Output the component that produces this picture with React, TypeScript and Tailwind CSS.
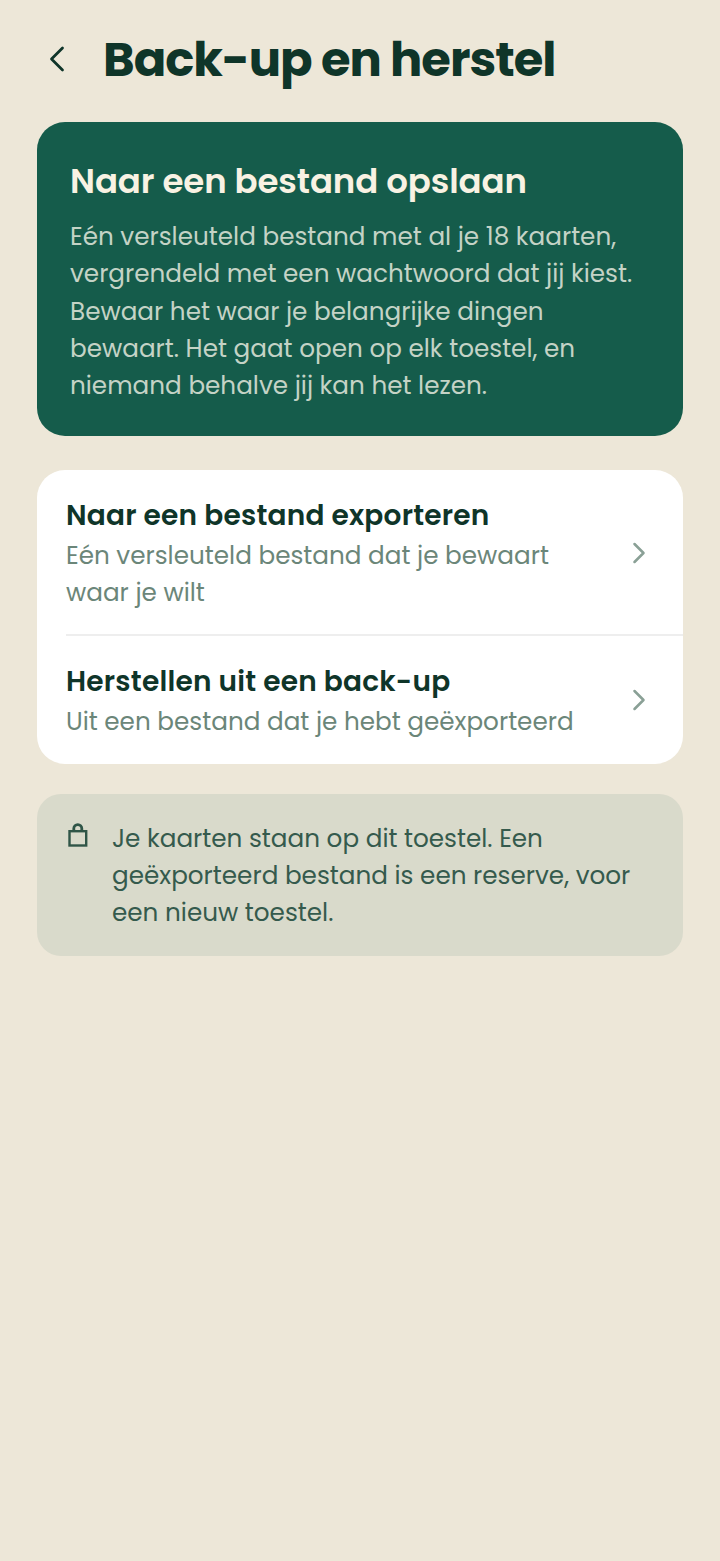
import { ChevronLeft, ChevronRight } from "lucide-react";

const font = "font-['Poppins','Noto_Sans','Open_Sans',sans-serif]";

interface RowProps {
  title: string;
  sub: string;
  border?: boolean;
  className: string;
}

const Row = ({ title, sub, border, className }: RowProps) => (
  <div className="relative flex items-center pl-[29px] pr-[26px]">
    <div className={`flex-1 pr-[24px] ${className}`}>
      <div className="text-[28px] leading-[38px] font-semibold tracking-[0.22px] text-[#0f3529]">{title}</div>
      <div className="mt-[2px] text-[24.7px] leading-[37px] text-[#6b8679]">{sub}</div>
    </div>
    <ChevronRight size={36} strokeWidth={1.7} className="shrink-0 text-[#8aa096]" />
    {border && <div className="absolute left-[29px] right-0 bottom-[-1px] h-[2px] bg-[#eeeeee]" />}
  </div>
);

export default function App() {
  return (
    <div className={`${font} min-h-[1561px] bg-[#ede7d8] px-[37px] pt-[29px]`}>
      <div className="flex items-center h-[62px] mb-[31px]">
        <ChevronLeft size={44} strokeWidth={1.5} className="shrink-0 -ml-[2px] -mt-[2px] text-[#0f3529]" />
        <h1 className="ml-[24px] text-[48px] font-bold tracking-[-1px] text-[#0f3529]">Back-up en herstel</h1>
      </div>
      <div className="rounded-[28px] bg-[#155c4b] px-[33px] pt-[36px] pb-[32px]">
        <h2 className="text-[34px] leading-[46px] font-semibold tracking-[-0.1px] text-[#f8f2e3]">Naar een bestand opslaan</h2>
        <p className="mt-[14px] text-[24.7px] leading-[37.25px] text-[#c4d3c6]">
          Eén versleuteld bestand met al je 18 kaarten, vergrendeld met een wachtwoord dat jij kiest. Bewaar het waar je belangrijke dingen bewaart. Het gaat open op elk toestel, en niemand behalve jij kan het lezen.
        </p>
      </div>
      <div className="mt-[34px] rounded-[28px] bg-white overflow-hidden">
        <Row className="pt-[27px] pb-[24px]" title="Naar een bestand exporteren" sub="Eén versleuteld bestand dat je bewaart waar je wilt" border />
        <Row className="pt-[28px] pb-[24px]" title="Herstellen uit een back-up" sub="Uit een bestand dat je hebt geëxporteerd" />
      </div>
      <div className="mt-[30px] flex rounded-[24px] bg-[#d9dacb] pl-[30px] pr-[40px] pt-[26px] pb-[25px]">
        <svg width="24" height="27" viewBox="0 0 24 27" fill="none" stroke="#2f5547" strokeWidth="2.4" className="mt-[1px] shrink-0">
          <rect x="2.5" y="10.2" width="16.7" height="14.3" />
          <path d="M6.8 10V7.6a4 4 0 0 1 8 0V10" strokeWidth="2.8" />
        </svg>
        <p className="ml-[21px] text-[24.7px] leading-[37px] text-[#355a4d]">
          Je kaarten staan op dit toestel. Een geëxporteerd bestand is een reserve, voor een nieuw toestel.
        </p>
      </div>
    </div>
  );
}
